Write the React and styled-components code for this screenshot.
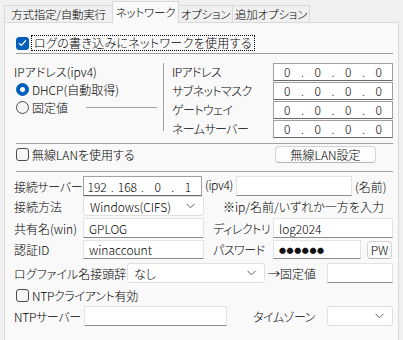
import React from "react";
import styled, { createGlobalStyle } from "styled-components";

// STYLES
const GlobalStyle = createGlobalStyle`
  body {
    margin: 0;
    background: #f0f0f0;
    font-family: "Noto Sans CJK JP", "Noto Sans", sans-serif;
    font-size: 12px;
    font-weight: 300;
    font-feature-settings: "palt" 1;
    color: #000;
  }
`;

const Window = styled.div`
  width: 403px;
  height: 340px;
  overflow: hidden;
  padding: 1px 4px 0 4px;
  box-sizing: border-box;
`;

const TabBar = styled.div`
  display: flex;
  align-items: flex-end;
  height: 21px;
`;

const Tab = styled.div`
  width: ${(p) => p.$w}px;
  height: ${(p) => (p.$active ? 22 : 17)}px;
  line-height: ${(p) => (p.$active ? 20 : 16)}px;
  box-sizing: border-box;
  text-align: center;
  white-space: nowrap;
  font-size: 11.5px;
  letter-spacing: -0.2px;
  border: 1px solid #d9d9d9;
  border-bottom: none;
  margin-left: -1px;
  background: ${(p) => (p.$active ? "#f9f9f9" : "#f0f0f0")};
  position: relative;
  z-index: ${(p) => (p.$active ? 1 : 0)};
  margin-bottom: ${(p) => (p.$active ? -1 : 0)}px;
  &:first-child {
    margin-left: 0;
  }
`;

const Panel = styled.div`
  border: 1px solid #d9d9d9;
  background: #f9f9f9;
  height: 330px;
  padding: 12px 5px 0 9px;
  box-sizing: border-box;
`;

const Row = styled.div`
  display: flex;
  align-items: center;
  height: ${(p) => p.$h || 20}px;
  margin-top: ${(p) => p.$mt || 0}px;
`;

const Box = styled.span`
  width: 13px;
  height: 13px;
  box-sizing: border-box;
  border-radius: 3px;
  flex-shrink: 0;
  margin: 0 2px 0 2px;
  display: flex;
  align-items: center;
  justify-content: center;
  border: 1px solid ${(p) => (p.$checked ? "#005fb8" : "#4a4a4a")};
  background: ${(p) => (p.$checked ? "#005fb8" : "#f6f6f6")};
`;

const CheckText = styled.span`
  white-space: nowrap;
  padding: 0 2px;
  line-height: 14px;
  letter-spacing: 0.3px;
  border: 1px dotted ${(p) => (p.$focus ? "#000" : "transparent")};
`;

const Rule = styled.div`
  height: 1px;
  background: #a0a0a0;
  margin: ${(p) => p.$mt || 0}px 0 0 2px;
`;

const IpSection = styled.div`
  display: flex;
  margin-top: 8px;
`;

const IpLeft = styled.div`
  width: 149px;
  display: flex;
  flex-direction: column;
`;

const VRule = styled.div`
  width: 1px;
  height: 68px;
  margin-top: 1px;
  background: #a0a0a0;
`;

const IpRight = styled.div`
  margin-left: 8px;
  display: flex;
  flex-direction: column;
`;

const Radio = styled.span`
  width: 13px;
  height: 13px;
  box-sizing: border-box;
  border-radius: 50%;
  flex-shrink: 0;
  margin: 0 3px 0 2px;
  display: flex;
  align-items: center;
  justify-content: center;
  border: 1px solid ${(p) => (p.$checked ? "#005fb8" : "#4a4a4a")};
  background: ${(p) => (p.$checked ? "#005fb8" : "#f6f6f6")};
  &::after {
    content: "";
    display: ${(p) => (p.$checked ? "block" : "none")};
    width: 5px;
    height: 5px;
    border-radius: 50%;
    background: #fff;
  }
`;

const Line = styled.span`
  height: 1px;
  flex: 1;
  background: #a0a0a0;
  margin: 0 6px 0 18px;
`;

const Label = styled.span`
  width: ${(p) => p.$w}px;
  padding-left: ${(p) => p.$pl || 0}px;
  box-sizing: border-box;
  white-space: nowrap;
  flex-shrink: 0;
  letter-spacing: ${(p) => p.$ls || 0}px;
  align-self: ${(p) => (p.$top ? "flex-start" : "auto")};
`;

const TextBox = styled.div`
  width: ${(p) => p.$w}px;
  height: ${(p) => p.$h || 19}px;
  box-sizing: border-box;
  flex-shrink: 0;
  background: #fff;
  border: 1px solid #e3e3e3;
  border-bottom-color: #8a8a8a;
  padding: 0 5px;
  display: flex;
  align-items: center;
  white-space: nowrap;
`;

const Secret = styled.span`
  font-size: 7px;
  letter-spacing: 0.6px;
  font-weight: 700;
  color: #111;
`;

const IpBox = styled.div`
  width: ${(p) => p.$w}px;
  height: ${(p) => p.$h || 18}px;
  box-sizing: border-box;
  flex-shrink: 0;
  background: #fff;
  border: 1px solid #a0a0a0;
  border-bottom-color: #6a6a6a;
  display: flex;
  align-items: center;
`;

const Octet = styled.span`
  flex: 1;
  text-align: center;
`;

const Dot = styled.span`
  width: 4px;
  text-align: center;
`;

const Select = styled.div`
  width: ${(p) => p.$w}px;
  height: ${(p) => p.$h || 20}px;
  box-sizing: border-box;
  flex-shrink: 0;
  background: #fff;
  border: 1px solid #e0e0e0;
  border-radius: 3px;
  padding: 0 8px 0 6px;
  display: flex;
  align-items: center;
  justify-content: space-between;
  white-space: nowrap;
`;

const Button = styled.div`
  width: ${(p) => p.$w}px;
  height: ${(p) => p.$h || 17}px;
  margin-left: ${(p) => p.$ml || 0}px;
  box-sizing: border-box;
  flex-shrink: 0;
  background: #fdfdfd;
  border: 1px solid #d3d3d3;
  border-bottom-color: #b5b5b5;
  border-radius: 4px;
  display: flex;
  align-items: center;
  justify-content: center;
  white-space: nowrap;
`;

const Chevron = () => (
  <svg width="9" height="6" viewBox="0 0 9 6">
    <polyline points="0.5,0.8 4.5,4.8 8.5,0.8" fill="none" stroke="#606060" strokeWidth="1" />
  </svg>
);

const Tick = () => (
  <svg width="9" height="8" viewBox="0 0 9 8">
    <polyline points="1,4.2 3.4,6.4 8,1.4" fill="none" stroke="#fff" strokeWidth="1.3" />
  </svg>
);

const Ip = ({ parts, w, h }) => (
  <IpBox $w={w} $h={h}>
    {parts.map((p, i) => (
      <React.Fragment key={i}>
        {i > 0 && <Dot>.</Dot>}
        <Octet>{p}</Octet>
      </React.Fragment>
    ))}
  </IpBox>
);

const zero = ["0", "0", "0", "0"];
const ipRows = ["IPアドレス", "サブネットマスク", "ゲートウェイ", "ネームサーバー"];

const App = () => {
  return (
    <Window>
      <GlobalStyle />
      <TabBar>
        <Tab $w={109}>方式指定/自動実行</Tab>
        <Tab $w={67} $active>ネットワーク</Tab>
        <Tab $w={55}>オプション</Tab>
        <Tab $w={78}>追加オプション</Tab>
      </TabBar>
      <Panel>
        <Row $h={16}>
          <Box $checked>
            <Tick />
          </Box>
          <CheckText $focus>ログの書き込みにネットワークを使用する</CheckText>
        </Row>
        <Rule $mt={2} />

        <IpSection>
          <IpLeft>
            <Row $h={18}>IPアドレス(ipv4)</Row>
            <Row $h={18}>
              <Radio $checked />
              DHCP(自動取得)
            </Row>
            <Row $h={18}>
              <Radio />
              固定値
              <Line />
            </Row>
          </IpLeft>
          <VRule />
          <IpRight>
            {ipRows.map((name) => (
              <Row $h={19} key={name}>
                <Label $w={101} $ls={-0.6}>{name}</Label>
                <Ip parts={zero} w={120} />
              </Row>
            ))}
          </IpRight>
        </IpSection>

        <Rule $mt={5} />
        <Row $h={17} $mt={2}>
          <Box />
          <Label $w={244} $pl={1}>無線LANを使用する</Label>
          <Button $w={101}>無線LAN設定</Button>
        </Row>
        <Rule $mt={8} />

        <Row $mt={4}>
          <Label $w={69} $ls={-0.3}>接続サーバー</Label>
          <Ip parts={["192", "168", "0", "1"]} w={119} h={20} />
          <Label $w={34} $pl={3} $ls={-0.4} $top>(ipv4)</Label>
          <TextBox $w={116} $h={20} />
          <Label $w={40} $pl={3}>(名前)</Label>
        </Row>
        <Row>
          <Label $w={69}>接続方法</Label>
          <Select $w={121}>
            Windows(CIFS)
            <Chevron />
          </Select>
          <Label $w={180} $pl={19}>※ip/名前/いずれか一方を入力</Label>
        </Row>
        <Row $mt={2}>
          <Label $w={69}>共有名(win)</Label>
          <TextBox $w={121} $h={20}>GPLOG</TextBox>
          <Label $w={69} $pl={9} $ls={-0.5}>ディレクトリ</Label>
          <TextBox $w={120} $h={20}>log2024</TextBox>
        </Row>
        <Row $h={19} $mt={2}>
          <Label $w={69}>認証ID</Label>
          <TextBox $w={121}>winaccount</TextBox>
          <Label $w={69} $pl={9} $ls={-0.5}>パスワード</Label>
          <TextBox $w={88}>
            <Secret>●●●●●●</Secret>
          </TextBox>
          <Button $w={25} $h={18} $ml={6}>PW</Button>
        </Row>
        <Row $mt={4}>
          <Label $w={113}>ログファイル名接頭辞</Label>
          <Select $w={138}>
            なし
            <Chevron />
          </Select>
          <Label $w={62} $pl={3}>→固定値</Label>
          <TextBox $w={66} $h={20} />
        </Row>
        <Row $h={16} $mt={4}>
          <Box />
          <Label $w={200} $pl={1} $ls={-0.3}>NTPクライアント有効</Label>
        </Row>
        <Row $mt={3}>
          <Label $w={70} $ls={-0.3}>NTPサーバー</Label>
          <TextBox $w={143} $h={20} />
          <Label $w={100} $pl={26} $ls={-0.5}>タイムゾーン</Label>
          <Select $w={66}>
            <span />
            <Chevron />
          </Select>
        </Row>
      </Panel>
    </Window>
  );
};

export default App;
